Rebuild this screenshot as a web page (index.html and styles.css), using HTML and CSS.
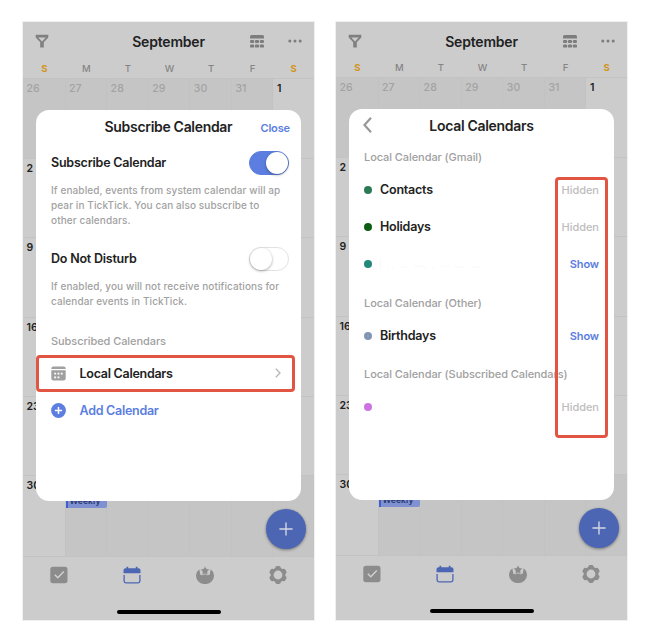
FILE: index.html
```html
<!DOCTYPE html>
<html lang="en">
<head>
<meta charset="utf-8">
<title>Subscribe Calendar</title>
<link rel="stylesheet" href="styles.css">
</head>
<body>
<svg class="defs" aria-hidden="true">
  <symbol id="filter" viewBox="0 0 14 14"><path d="M.7.700h12.600v2.800L8.800 8.200v5.200H5.200V8.200L.7 3.500z" fill="#808080"/><path d="M3.200 3.600h7.600L7 7.600z" fill="#ccc"/></symbol>
  <symbol id="table" viewBox="0 0 14 13"><g fill="#7d7d7d"><path d="M0 3.500V1.500Q0 0 1.500 0h11Q14 0 14 1.500v2z"/><rect y="5" width="4.200" height="3" rx="1.200"/><rect x="4.900" y="5" width="4.200" height="3" rx="1.200"/><rect x="9.800" y="5" width="4.200" height="3" rx="1.200"/><rect y="9.600" width="4.200" height="3" rx="1.200"/><rect x="4.900" y="9.600" width="4.200" height="3" rx="1.200"/><rect x="9.800" y="9.600" width="4.200" height="3" rx="1.200"/></g></symbol>
  <symbol id="dots" viewBox="0 0 16 4"><g fill="#7d7d7d"><circle cx="2.800" cy="2" r="1.500"/><circle cx="8" cy="2" r="1.500"/><circle cx="13.200" cy="2" r="1.500"/></g></symbol>
  <symbol id="check" viewBox="0 0 18 18"><rect x=".3" y=".8" width="17.200" height="16.400" rx="2.600" fill="#8c8c8c"/><path d="M4.800 8.800l3 3 6-6.300" fill="none" stroke="#d2d2d2" stroke-width="1.400"/></symbol>
  <symbol id="cal" viewBox="0 0 18 18"><path d="M.5 7.300V4.200Q.5 2.300 2.600 2.300h.9V.7h1.700v1.600h7.600V.7h1.700v1.600h.9q2.100 0 2.100 1.900v3.100z" fill="#4c66b3"/><path d="M1.100 9v6.100q0 1.800 1.800 1.800h12.200q1.800 0 1.800-1.800V9" fill="none" stroke="#4c66b3" stroke-width="1.300"/></symbol>
  <symbol id="tomato" viewBox="0 0 18 18"><path d="M3.300 3.200A9 8.400 0 1 0 14.700 3.200L13.600 9 9 8 4.400 9z" fill="#8c8c8c"/><path d="M9-.1l1.500 2.800 3.300.6-2.300 2.500.6 3.300L9 7.800 5.900 9.100l.6-3.300-2.300-2.500 3.300-.6z" fill="#8c8c8c" stroke="#ccc" stroke-width=".7"/></symbol>
  <symbol id="gear" viewBox="0 0 18 18"><g fill="#8c8c8c"><circle cx="9" cy="9" r="7.400"/><g id="tooth"><rect x="6.200" y="0" width="5.600" height="18" rx="2"/></g><use href="#tooth" transform="rotate(60 9 9)"/><use href="#tooth" transform="rotate(120 9 9)"/></g><circle cx="9" cy="9" r="4.400" fill="#ccc"/></symbol>
  <symbol id="plus" viewBox="0 0 14 14"><path d="M7 .4v13.200M.4 7h13.200" stroke="#d2d6e4" stroke-width="1.400"/></symbol>
</svg>
<main class="screens">
  <section class="phone">
    <header class="top">
      <svg class="i-filter"><use href="#filter"/></svg>
      <h1 class="month">September</h1>
      <svg class="i-table"><use href="#table"/></svg>
      <svg class="i-dots"><use href="#dots"/></svg>
    </header>
    <div class="cols names"><b>S</b><span>M</span><span>T</span><span>W</span><span>T</span><span>F</span><b>S</b></div>
    <div class="month-grid">
      <div class="cols out"><span>26</span><span>27</span><span>28</span><span>29</span><span>30</span><span>31</span><span class="in">1</span></div>
      <div class="week">2</div>
      <div class="week">9</div>
      <div class="week">16</div>
      <div class="week">23</div>
      <div class="cols out"><span class="in">30</span><span><i class="event">Weekly</i></span><span></span><span></span><span></span><span></span><span></span></div>
    </div>
    <nav class="tabs">
      <svg><use href="#check"/></svg><svg><use href="#cal"/></svg><svg><use href="#tomato"/></svg><svg><use href="#gear"/></svg>
    </nav>
    <div class="home"></div>
    <div class="fab"><svg><use href="#plus"/></svg></div>
    <div class="modal">
      <div class="modal-head"><h2>Subscribe Calendar</h2><span class="close">Close</span></div>
      <div class="setting"><span class="name">Subscribe Calendar</span><span class="toggle on"></span></div>
      <p class="note">If enabled, events from system calendar will ap<br>pear in TickTick. You can also subscribe to<br>other calendars.</p>
      <div class="setting second"><span class="name">Do Not Disturb</span><span class="toggle"></span></div>
      <p class="note">If enabled, you will not receive notifications for<br>calendar events in TickTick.</p>
      <div class="label sub-label">Subscribed Calendars</div>
      <div class="link-row">
        <svg class="i-link" viewBox="0 0 15 15"><path d="M.3 3.100V2.400Q.3.500 2.300.5h10.400q2 0 2 1.900v.7zM.3 4.200h14.400v8.300q0 2.100-2.100 2.100H2.400Q.3 14.600.3 12.500z" fill="#a0a0a0"/><path d="M3.200 7.600h1.900M6.500 7.600h1.900M9.800 7.600h1.900M3.200 11.300h1.900M6.500 11.300h1.900" stroke="#fff" stroke-width="1.700"/></svg>
        <span class="name">Local Calendars</span>
        <svg class="chevron" viewBox="0 0 6 10"><path d="M.8.800L5 5 .8 9.200" fill="none" stroke="#b4b4b4" stroke-width="1.300"/></svg>
      </div>
      <div class="link-row add">
        <svg class="i-link" viewBox="0 0 15 15"><circle cx="7.500" cy="7.500" r="7.400" fill="#5b7ee0"/><path d="M7.500 3.900v7.200M3.900 7.500h7.200" stroke="#fff" stroke-width="1.500"/></svg>
        <span class="name">Add Calendar</span>
      </div>
    </div>
    <div class="mark mark-row"></div>
  </section>

  <section class="phone raised">
    <header class="top">
      <svg class="i-filter"><use href="#filter"/></svg>
      <h1 class="month">September</h1>
      <svg class="i-table"><use href="#table"/></svg>
      <svg class="i-dots"><use href="#dots"/></svg>
    </header>
    <div class="cols names"><b>S</b><span>M</span><span>T</span><span>W</span><span>T</span><span>F</span><b>S</b></div>
    <div class="month-grid">
      <div class="cols out"><span>26</span><span>27</span><span>28</span><span>29</span><span>30</span><span>31</span><span class="in">1</span></div>
      <div class="week">2</div>
      <div class="week">9</div>
      <div class="week">16</div>
      <div class="week">23</div>
      <div class="cols out"><span class="in">30</span><span><i class="event">Weekly</i></span><span></span><span></span><span></span><span></span><span></span></div>
    </div>
    <nav class="tabs">
      <svg><use href="#check"/></svg><svg><use href="#cal"/></svg><svg><use href="#tomato"/></svg><svg><use href="#gear"/></svg>
    </nav>
    <div class="home"></div>
    <div class="fab"><svg><use href="#plus"/></svg></div>
    <div class="modal">
      <div class="modal-head"><svg class="back" viewBox="0 0 9 16"><path d="M8 .8L1.500 8 8 15.200" fill="none" stroke="#999" stroke-width="2.200"/></svg><h2>Local Calendars</h2></div>
      <div class="label first">Local Calendar (Gmail)</div>
      <div class="item"><i class="dot green"></i><span class="name">Contacts</span><span class="state">Hidden</span></div>
      <div class="item"><i class="dot forest"></i><span class="name">Holidays</span><span class="state">Hidden</span></div>
      <div class="item"><i class="dot teal"></i><svg class="erased" viewBox="0 0 102 12"><path d="M.5 1v9M8 8v2M13 8v2M21 9h6M34 8h10M45 9v3M53 9v3M61 8h9M75 9h10M93 9h7" fill="none" stroke="#f8f8f8"/></svg><span class="state show">Show</span></div>
      <div class="label other">Local Calendar (Other)</div>
      <div class="item"><i class="dot slate"></i><span class="name">Birthdays</span><span class="state show">Show</span></div>
      <div class="label">Local Calendar (Subscribed Calendars)</div>
      <div class="item"><i class="dot orchid"></i><span class="state">Hidden</span></div>
    </div>
    <div class="mark mark-states"></div>
  </section>
</main>
</body>
</html>
```
FILE: styles.css
```css
* { box-sizing: border-box; }
body { margin: 0; background: #fff; font-family: Inter, "Liberation Sans", sans-serif; color: #222; }
h1, h2, p { margin: 0; }
svg { display: block; flex: none; }
.defs { width: 0; height: 0; position: absolute; }
.screens { display: flex; gap: 22px; padding: 22px 23px; }
.phone { position: relative; width: 291px; height: 598px; background: #ccc; overflow: hidden; box-shadow: 0 0 0 1px #f0f0f0; }
.top { height: 39px; display: grid; grid-template-columns: 38px 1fr 23px 30px; align-items: center; }
.raised .top { height: 38px; }
.i-filter { width: 14px; height: 14px; margin: -1px 0 0 12px; }
.month { font-size: 14px; font-weight: 600; letter-spacing: -.2px; text-align: center; padding-left: 15px; }
.i-table { width: 14px; height: 13px; margin-left: -11px; }
.i-dots { width: 16px; height: 4px; margin: -1px 0 0 2.500px; }
.cols { display: grid; grid-template-columns: 42.500px repeat(5, 41.600px) 1fr; }
.names { height: 17px; line-height: 15px; font-size: 9.500px; font-weight: 500; text-align: center; color: #858585; }
.names b { color: #d3941c; font-weight: 700; }
.month-grid { display: grid; grid-template-rows: 80.200px repeat(4, 79.300px) 80.600px; border-bottom: 1px solid #c3c3c3; height: 479px; font-size: 10.500px; line-height: 19px; font-weight: 600; }
.week, .out > span { border-top: 1px solid #c3c3c3; padding-left: 3.500px; }
.out { font-weight: 500; color: #a2a2a2; letter-spacing: .1px; }
.out > span { background: #c5c5c5; border-right: 1px solid #c2c2c2; }
.out > span:last-child { border-right: 0; }
.out > .in { background: #ccc; color: #222; font-weight: 600; letter-spacing: 0; }
.event { display: block; width: 40.500px; height: 13px; margin: 18.500px 0 0 -3px; border-left: 2px solid #3d5fd0; border-radius: 0 2px 2px 0; background: #7f91d0; color: #26376e; font-style: normal; font-size: 8.500px; line-height: 13px; font-weight: 600; padding-left: 1.500px; }
.tabs { height: 36px; display: flex; align-items: center; justify-content: space-around; }
.tabs svg { width: 18px; height: 18px; overflow: visible; }
.home { width: 104px; height: 4px; margin: 17px auto 0; border-radius: 2px; background: #000; }
.fab { position: absolute; left: 243px; top: 487px; width: 39.500px; height: 39.500px; border-radius: 50%; background: #4c66b3; display: grid; place-items: center; box-shadow: 0 1px 3px #0006; }
.fab svg { width: 14px; height: 14px; }
.raised .fab { top: 486px; }
.modal { position: absolute; left: 13px; top: 88px; width: 265.300px; height: 391px; border-radius: 13px; background: #fff; padding: 0 15.400px 0 15px; }
.raised .modal { top: 87px; }
.modal-head { position: relative; height: 34px; display: flex; align-items: center; justify-content: center; }
h2 { font-size: 14px; line-height: 20px; font-weight: 600; letter-spacing: -.31px; white-space: nowrap; }
.close { position: absolute; right: -4px; top: 10px; font-size: 11px; line-height: 16px; font-weight: 600; letter-spacing: -.15px; color: #5b7ee0; }
.back { position: absolute; left: -1px; top: 7.500px; width: 9px; height: 16px; }
.setting { height: 38px; display: flex; align-items: center; justify-content: space-between; }
.second { margin-top: 12.500px; }
.name { font-size: 12.500px; line-height: 18px; font-weight: 600; letter-spacing: -.22px; white-space: nowrap; }
.toggle { width: 40px; height: 24px; flex: none; margin-right: -3px; border: 1px solid #e2e2e2; border-radius: 12px; display: flex; align-items: center; }
.toggle::before { content: ""; width: 22px; height: 22px; border-radius: 50%; background: #fff; box-shadow: 0 1px 3px #0005; }
.toggle.on { background: #5b7ee0; border-color: #5b7ee0; justify-content: flex-end; }
.note { font-size: 10px; line-height: 15px; font-weight: 500; letter-spacing: .1px; color: #a2a2a2; white-space: nowrap; padding-top: .5px; }
.label { height: 15px; margin: 12.300px 0 6.700px; font-size: 11px; line-height: 15px; font-weight: 500; letter-spacing: -.07px; color: #a0a0a0; white-space: nowrap; }
.sub-label { margin: 25px 0 6.500px; }
.first { margin-top: 6.500px; }
.other { margin: 12.900px 0 6.100px; }
.link-row { height: 36px; display: flex; align-items: center; }
.link-row .name { padding-top: 2px; letter-spacing: -.27px; }
.i-link { width: 15px; height: 15px; margin-right: 13.500px; }
.chevron { width: 6px; height: 10px; margin-left: auto; margin-right: 4.500px; }
.add { height: 38px; color: #5b7ee0; }
.item { height: 37.300px; display: flex; align-items: center; }
.dot { width: 8px; height: 8px; border-radius: 50%; margin-right: 8px; flex: none; }
.green { background: #2b7a55; }
.forest { background: #0d5e12; }
.teal { background: #218a7d; }
.slate { background: #8195b5; }
.orchid { background: #cc73e1; }
.erased { width: 102px; height: 12px; }
.state { margin-left: auto; font-size: 11px; font-weight: 500; letter-spacing: -.05px; color: #bdbdbd; }
.show { color: #5b7ee0; font-weight: 600; letter-spacing: -.15px; }
.mark { position: absolute; border: 3px solid #e25542; border-radius: 4px; }
.mark-row { left: 13px; top: 333px; width: 259px; height: 37px; }
.mark-states { left: 219px; top: 155px; width: 53px; height: 261px; }
```
